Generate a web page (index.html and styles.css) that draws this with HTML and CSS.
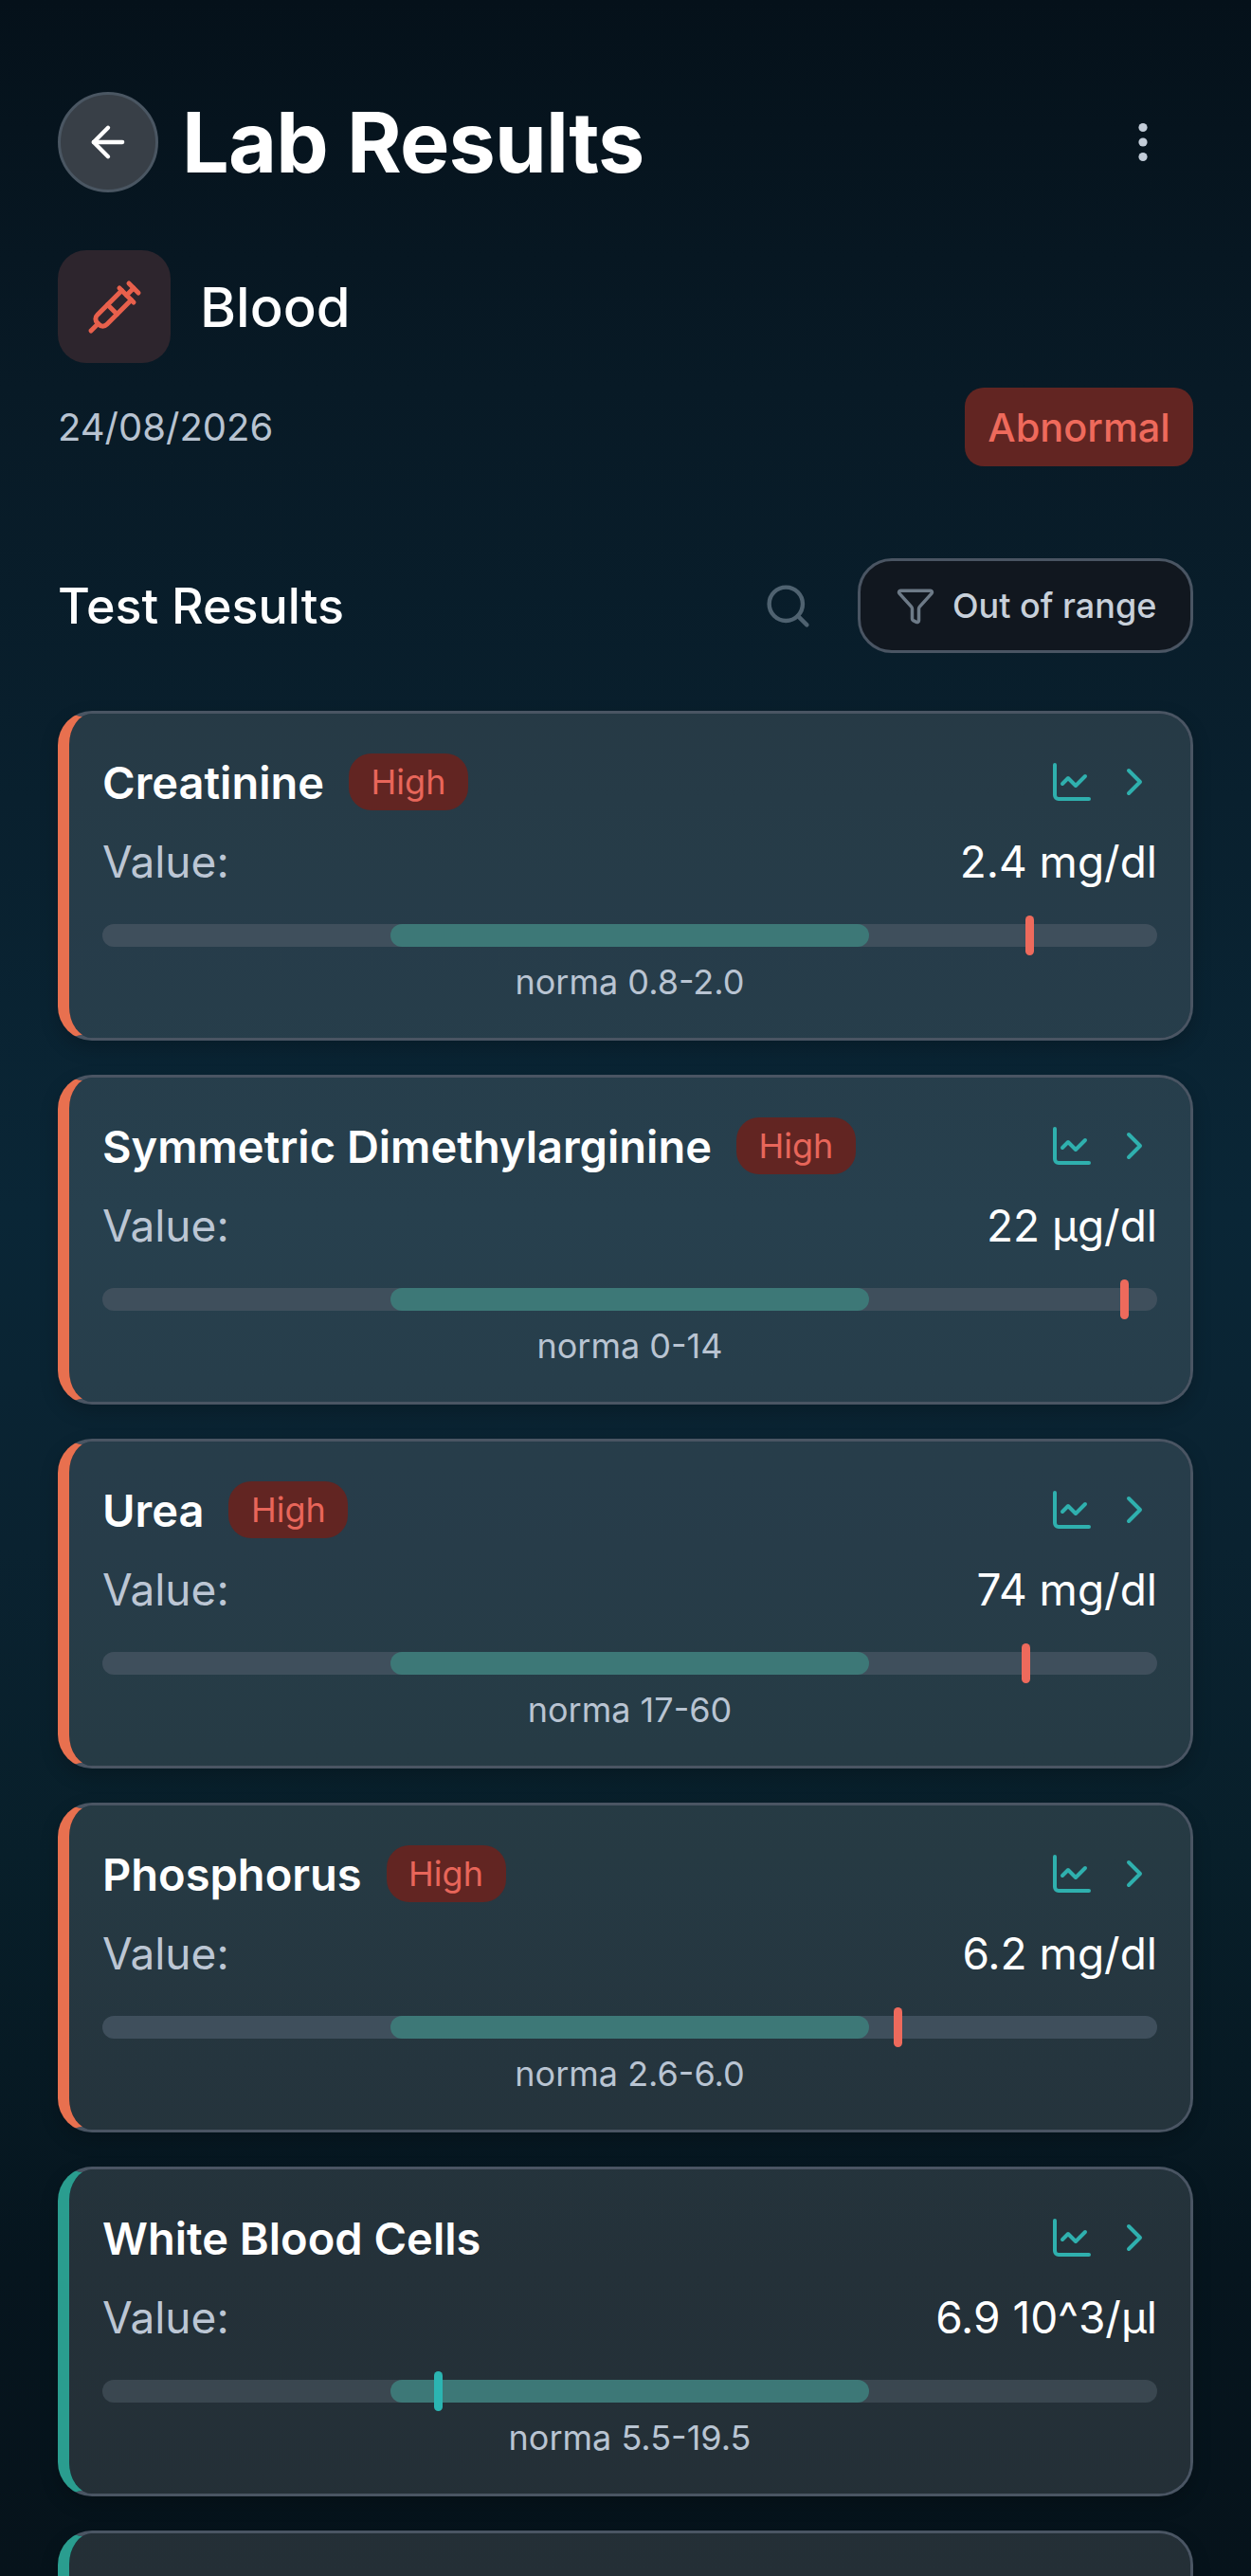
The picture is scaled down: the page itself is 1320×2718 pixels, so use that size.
FILE: index.html
```html
<!DOCTYPE html>
<html lang="en">
<head>
    <meta charset="UTF-8">
    <meta name="viewport" content="width=device-width, initial-scale=1.0">
    <title>Lab Results</title>
    <link rel="stylesheet" href="styles.css">
</head>
<body>
    <main class="screen">
        <header class="topbar">
            <button class="back-btn" aria-label="Back">
                <svg class="icon" width="52" height="52" viewBox="0 0 24 24"><path d="m12 19-7-7 7-7"/><path d="M19 12H5"/></svg>
            </button>
            <h1>Lab Results</h1>
            <svg class="kebab" width="12" height="44" viewBox="0 0 12 44"><circle cx="6" cy="6.500" r="4.600"/><circle cx="6" cy="22" r="4.600"/><circle cx="6" cy="37.500" r="4.600"/></svg>
        </header>

        <div class="panel-title">
            <div class="panel-icon">
                <svg class="icon" width="60" height="60" viewBox="0 0 24 24"><path d="m18 2 4 4"/><path d="m17 7 3-3"/><path d="M19 9 8.700 19.300c-1 1-2.500 1-3.400 0l-.6-.6c-1-1-1-2.500 0-3.400L15 5"/><path d="m9 11 4 4"/><path d="m5 19-3 3"/><path d="m14 4 6 6"/></svg>
            </div>
            <h2>Blood</h2>
        </div>

        <div class="date-row">
            <span class="date">24/08/2026</span>
            <span class="status">Abnormal</span>
        </div>

        <div class="section-head">
            <h3>Test Results</h3>
            <svg class="icon search" width="53" height="53" viewBox="0 0 24 24"><circle cx="11" cy="11" r="8"/><path d="m21 21-4.300-4.300"/></svg>
            <button class="filter-btn">
                <svg class="icon" width="42" height="42" viewBox="0 0 24 24"><path d="M10 20a1 1 0 0 0 .553.895l2 1A1 1 0 0 0 14 21v-7a2 2 0 0 1 .517-1.341L21.740 4.670A1 1 0 0 0 21 3H3a1 1 0 0 0-.742 1.670l7.225 7.989A2 2 0 0 1 10 14z"/></svg>
                Out of range
            </button>
        </div>

        <section class="results">
            <article class="card card-high">
                <div class="card-top">
                    <span class="name">Creatinine</span>
                    <span class="tag">High</span>
                    <div class="card-actions">
                        <svg class="icon" width="48" height="48" viewBox="0 0 24 24"><path d="M3 3v16a2 2 0 0 0 2 2h16"/><path d="m19 9-5 5-4-4-3 3"/></svg>
                        <svg class="icon" width="48" height="48" viewBox="0 0 24 24"><path d="m9 18 6-6-6-6"/></svg>
                    </div>
                </div>
                <div class="value-row"><span>Value:</span><span class="value">2.4 mg/dl</span></div>
                <div class="track"><div class="range"></div><div class="marker" style="left: 87.9%"></div></div>
                <p class="norm">norma 0.8-2.0</p>
            </article>

            <article class="card card-high">
                <div class="card-top">
                    <span class="name">Symmetric Dimethylarginine</span>
                    <span class="tag">High</span>
                    <div class="card-actions">
                        <svg class="icon" width="48" height="48" viewBox="0 0 24 24"><path d="M3 3v16a2 2 0 0 0 2 2h16"/><path d="m19 9-5 5-4-4-3 3"/></svg>
                        <svg class="icon" width="48" height="48" viewBox="0 0 24 24"><path d="m9 18 6-6-6-6"/></svg>
                    </div>
                </div>
                <div class="value-row"><span>Value:</span><span class="value">22 µg/dl</span></div>
                <div class="track"><div class="range"></div><div class="marker" style="left: 96.9%"></div></div>
                <p class="norm">norma 0-14</p>
            </article>

            <article class="card card-high">
                <div class="card-top">
                    <span class="name">Urea</span>
                    <span class="tag">High</span>
                    <div class="card-actions">
                        <svg class="icon" width="48" height="48" viewBox="0 0 24 24"><path d="M3 3v16a2 2 0 0 0 2 2h16"/><path d="m19 9-5 5-4-4-3 3"/></svg>
                        <svg class="icon" width="48" height="48" viewBox="0 0 24 24"><path d="m9 18 6-6-6-6"/></svg>
                    </div>
                </div>
                <div class="value-row"><span>Value:</span><span class="value">74 mg/dl</span></div>
                <div class="track"><div class="range"></div><div class="marker" style="left: 87.5%"></div></div>
                <p class="norm">norma 17-60</p>
            </article>

            <article class="card card-high">
                <div class="card-top">
                    <span class="name">Phosphorus</span>
                    <span class="tag">High</span>
                    <div class="card-actions">
                        <svg class="icon" width="48" height="48" viewBox="0 0 24 24"><path d="M3 3v16a2 2 0 0 0 2 2h16"/><path d="m19 9-5 5-4-4-3 3"/></svg>
                        <svg class="icon" width="48" height="48" viewBox="0 0 24 24"><path d="m9 18 6-6-6-6"/></svg>
                    </div>
                </div>
                <div class="value-row"><span>Value:</span><span class="value">6.2 mg/dl</span></div>
                <div class="track"><div class="range"></div><div class="marker" style="left: 75.4%"></div></div>
                <p class="norm">norma 2.6-6.0</p>
            </article>

            <article class="card card-ok">
                <div class="card-top">
                    <span class="name">White Blood Cells</span>
                    <div class="card-actions">
                        <svg class="icon" width="48" height="48" viewBox="0 0 24 24"><path d="M3 3v16a2 2 0 0 0 2 2h16"/><path d="m19 9-5 5-4-4-3 3"/></svg>
                        <svg class="icon" width="48" height="48" viewBox="0 0 24 24"><path d="m9 18 6-6-6-6"/></svg>
                    </div>
                </div>
                <div class="value-row"><span>Value:</span><span class="value">6.9 10^3/µl</span></div>
                <div class="track"><div class="range"></div><div class="marker" style="left: 31.8%"></div></div>
                <p class="norm">norma 5.5-19.5</p>
            </article>

            <article class="card card-ok card-empty"></article>
        </section>
    </main>
</body>
</html>
```
FILE: styles.css
```css
html, body {
    margin: 0;
    height: 2718px;
    overflow: hidden;
}

body {
    background: linear-gradient(180deg, #05111a 0%, #081a26 15%, #0a2636 47%, #0a2230 60%, #081f2a 72%, #06151e 88%, #06131b 100%);
    color: #fff;
    font-family: Inter, "Liberation Sans", sans-serif;
}

.screen {
    padding: 97px 61px 0;
}

.icon {
    fill: none;
    stroke: currentColor;
    stroke-width: 2;
    stroke-linecap: round;
    stroke-linejoin: round;
    flex: none;
}

/* top */
.topbar {
    display: flex;
    align-items: center;
    height: 106px;
}

.back-btn {
    width: 106px;
    height: 106px;
    box-sizing: border-box;
    display: flex;
    align-items: center;
    justify-content: center;
    padding: 0;
    border-radius: 50%;
    border: 3px solid #4a5662;
    background: #383f47;
    color: #fff;
}

h1 {
    margin: 0 0 0 25px;
    font-size: 88px;
    font-weight: 700;
    letter-spacing: -0.8px;
    line-height: 1;
    flex: 1;
}

.kebab {
    fill: #c3cdd9;
    margin-right: 47px;
}

.panel-title {
    display: flex;
    align-items: center;
    gap: 31px;
    margin-top: 61px;
}

.panel-icon {
    width: 119px;
    height: 119px;
    border-radius: 30px;
    background: #2d252d;
    color: #e8604c;
    display: flex;
    align-items: center;
    justify-content: center;
}

h2 {
    margin: 0;
    font-size: 58px;
    font-weight: 500;
}

.date-row {
    display: flex;
    align-items: center;
    justify-content: space-between;
    margin-top: 26px;
}

.date {
    font-size: 40px;
    color: #b8c3d1;
}

.status {
    display: flex;
    align-items: center;
    justify-content: center;
    width: 241px;
    height: 83px;
    border-radius: 20px;
    background: #622522;
    color: #ee6a5c;
    font-size: 41.500px;
    font-weight: 500;
}

.section-head {
    display: flex;
    align-items: center;
    margin-top: 97px;
    height: 100px;
}

h3 {
    margin: 0;
    flex: 1;
    font-size: 52px;
    font-weight: 500;
}

.search {
    color: #4f6270;
    margin-right: 47px;
}

.filter-btn {
    display: flex;
    align-items: center;
    gap: 18px;
    box-sizing: border-box;
    width: 354px;
    height: 100px;
    padding: 0 0 0 37px;
    border: 3px solid #4a5563;
    border-radius: 36px;
    background: #11171f;
    color: #c8d0da;
    font-family: inherit;
    font-size: 36px;
    font-weight: 500;
}

.filter-btn .icon {
    color: #6d7a87;
}

/* cards */
.results {
    display: flex;
    flex-direction: column;
    gap: 36px;
    margin-top: 61px;
}

.card {
    box-sizing: border-box;
    height: 348px;
    padding: 42px 35px 0;
    border: 3px solid #4a5563;
    border-left-width: 12px;
    border-radius: 36px;
    background: rgba(255, 255, 255, 0.12);
    box-shadow: 0 8px 20px rgba(0, 0, 0, 0.2);
    background-clip: padding-box;
}

.card-high {
    border-left-color: #e8704f;
}

.card-ok {
    border-left-color: #2a9d8f;
}

.card-top {
    display: flex;
    align-items: center;
    height: 60px;
}

.name {
    font-size: 47px;
    font-weight: 600;
}

.tag {
    display: flex;
    align-items: center;
    justify-content: center;
    width: 126px;
    height: 60px;
    margin-left: 26px;
    border-radius: 24px;
    background: #622522;
    color: #e8665a;
    font-size: 36px;
}

.card-actions {
    display: flex;
    gap: 18px;
    margin-left: auto;
    color: #2fb0ae;
}

.value-row {
    display: flex;
    justify-content: space-between;
    margin-top: 26px;
    font-size: 46px;
    line-height: 56px;
    color: #bcc6d4;
}

.value {
    color: #fff;
}

.track {
    position: relative;
    height: 24px;
    margin-top: 38px;
    border-radius: 12px;
    background: #3f4f5c;
}

.card-ok .track {
    background: #3a4750;
}

.range {
    position: absolute;
    left: 27.3%;
    width: 45.4%;
    height: 100%;
    border-radius: 12px;
    background: #3d7877;
}

.marker {
    position: absolute;
    top: -9px;
    width: 9px;
    height: 42px;
    margin-left: -4px;
    border-radius: 5px;
    background: #ee6a5c;
}

.card-ok .marker {
    background: #2bb5b2;
}

.norm {
    margin: 16px 0 0;
    font-size: 36px;
    line-height: 42px;
    text-align: center;
    color: #b9c4d2;
}
```
